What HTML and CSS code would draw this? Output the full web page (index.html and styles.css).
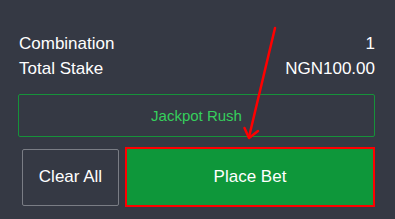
FILE: index.html
```html
<!DOCTYPE html>
<html>
<head>
<meta charset="utf-8">
<link rel="stylesheet" href="styles.css">
</head>
<body>
<div class="panel">
  <div class="row"><span>Combination</span><span>1</span></div>
  <div class="row"><span>Total Stake</span><span>NGN100.00</span></div>
  <div class="jackpot">Jackpot Rush</div>
  <div class="actions">
    <button class="btn clear">Clear All</button>
    <button class="btn place">Place Bet</button>
  </div>
  <svg class="arrow" width="395" height="219" viewBox="0 0 395 219">
    <path d="M275 28 L249 137" stroke="#ff0000" stroke-width="2.5" fill="none" stroke-linecap="round"/>
    <path d="M244.5 128 L249 138 L258 131" stroke="#ff0000" stroke-width="2.5" fill="none" stroke-linecap="round" stroke-linejoin="round"/>
  </svg>
</div>
</body>
</html>
```
FILE: styles.css
```css
html, body {
  margin: 0;
  padding: 0;
  background: #353944;
}
.panel {
  position: relative;
  width: 395px;
  height: 219px;
  box-sizing: border-box;
  padding: 31px 20px 0 18px;
  font-family: "Liberation Sans", Arial, sans-serif;
  color: #ffffff;
}
.row {
  display: flex;
  justify-content: space-between;
  font-size: 17px;
  line-height: 25px;
  padding-left: 1px;
}
.jackpot {
  margin-top: 13px;
  height: 43px;
  box-sizing: border-box;
  border: 1px solid #16923a;
  border-radius: 2px;
  display: flex;
  align-items: center;
  justify-content: center;
  color: #36cf5c;
  font-size: 15px;
}
.actions {
  margin-top: 10px;
  display: flex;
  align-items: center;
  gap: 6px;
  padding-left: 4px;
}
.btn {
  font-family: "Liberation Sans", Arial, sans-serif;
  font-size: 17px;
  color: #ffffff;
  margin: 0;
  cursor: pointer;
}
.clear {
  width: 97px;
  height: 57px;
  background: transparent;
  border: 1px solid #7a7d85;
  border-radius: 2px;
}
.place {
  flex: 1;
  height: 60px;
  background: #0e973a;
  border: 2px solid #ff0000;
}
.arrow {
  position: absolute;
  left: 0;
  top: 0;
  pointer-events: none;
}
```
